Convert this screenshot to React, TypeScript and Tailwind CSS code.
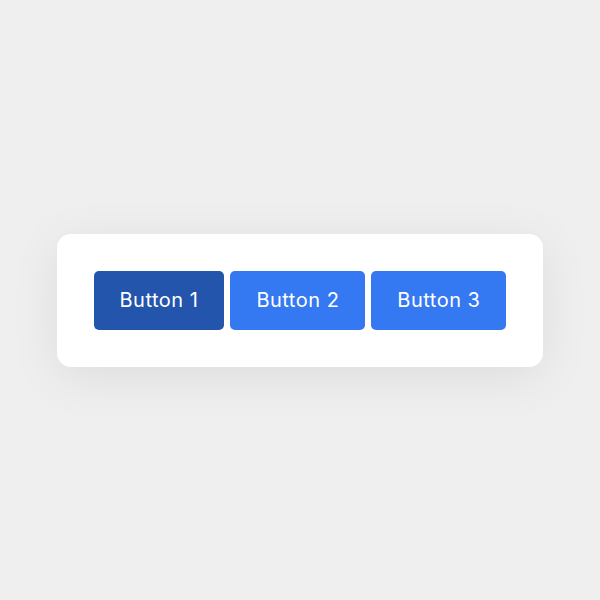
export default function App() {
  return (
    <div className="flex h-[600px] w-[600px] items-center justify-center bg-[#efefef] font-['Inter',sans-serif]">
      {/* Card */}
      <div className="flex gap-[6px] rounded-[14px] bg-white p-[37px] shadow-[0_10px_50px_rgba(0,0,0,0.08)]">
        <button className="h-[59px] rounded-[5px] bg-[#2355ac] px-[26px] text-[20px] tracking-[0.5px] text-white">
          Button 1
        </button>
        <button className="h-[59px] rounded-[5px] bg-[#3478f2] px-[26px] text-[20px] tracking-[0.5px] text-white">
          Button 2
        </button>
        <button className="h-[59px] rounded-[5px] bg-[#3478f2] px-[26px] text-[20px] tracking-[0.5px] text-white">
          Button 3
        </button>
      </div>
    </div>
  );
}
